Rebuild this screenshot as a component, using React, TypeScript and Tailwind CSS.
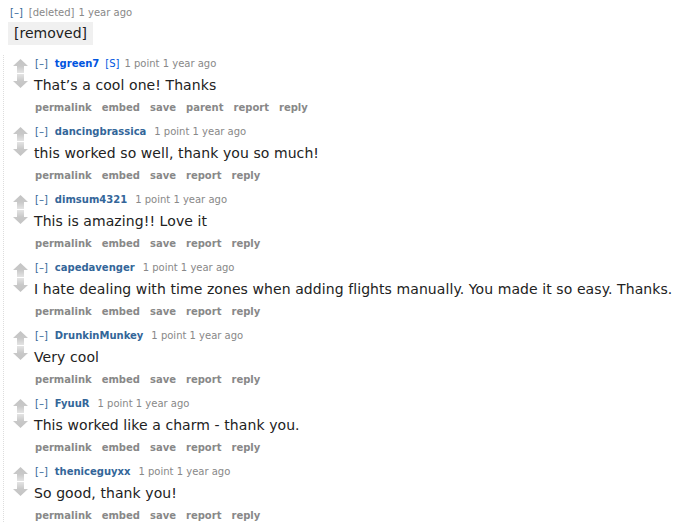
const comments = [
  { author: "tgreen7", op: true, body: "That’s a cool one! Thanks", parent: true },
  { author: "dancingbrassica", body: "this worked so well, thank you so much!" },
  { author: "dimsum4321", body: "This is amazing!! Love it" },
  { author: "capedavenger", body: "I hate dealing with time zones when adding flights manually. You made it so easy. Thanks." },
  { author: "DrunkinMunkey", body: "Very cool" },
  { author: "FyuuR", body: "This worked like a charm - thank you." },
  { author: "theniceguyxx", body: "So good, thank you!" },
];

function Arrow({ down }: { down?: boolean }) {
  const id = down ? "gd" : "gu";
  return (
    <svg width="15" height="14" viewBox="0 0 15 14" className={down ? "rotate-180" : ""}>
      <defs>
        <linearGradient id={id} x1="0" y1="0" x2="0" y2="1">
          <stop offset="0" stopColor="#c4c4c4" />
          <stop offset="0.5" stopColor="#c8c8c8" />
          <stop offset="1" stopColor="#e4e4e4" />
        </linearGradient>
      </defs>
      <polygon points="7.5,0 15,7 11,7 11,14 4,14 4,7 0,7" fill={`url(#${id})`} />
    </svg>
  );
}

function Comment({ c }: { c: (typeof comments)[number] }) {
  const buttons = c.parent
    ? ["permalink", "embed", "save", "parent", "report", "reply"]
    : ["permalink", "embed", "save", "report", "reply"];
  return (
    <div className="flex mb-[9px]">
      <div className="w-[31px] pl-[9px] pt-[4px] flex flex-col">
        <Arrow />
        <div className="h-[1px]" />
        <Arrow down />
      </div>
      <div className="flex flex-col">
        <div className="h-[16px] flex items-center text-[10px] text-[#888]">
          <span className="text-[#369] mr-[7px]">[–]</span>
          {c.op ? (
            <>
              <span className="font-bold text-[#0055df] mr-[6px]">{c.author}</span>
              <span className="text-[#0055df] mr-[5px]">[S]</span>
            </>
          ) : (
            <span className="font-bold text-[#369] mr-[8px]">{c.author}</span>
          )}
          <span>1 point 1 year ago</span>
        </div>
        <div className="mt-[3px] -ml-[1px] text-[14px] leading-[22px] tracking-[0.08px] text-[#222] whitespace-nowrap">
          {c.body}
        </div>
        <div className="mt-[4px] h-[14px] flex items-center gap-[10px] text-[10px] font-bold text-[#888]">
          {buttons.map((b) => (
            <span key={b}>{b}</span>
          ))}
        </div>
      </div>
    </div>
  );
}

export default function App() {
  return (
    <div
      className="w-[686px] h-[524px] overflow-hidden bg-white pl-[8px]"
      style={{ fontFamily: "Verdana, 'DejaVu Sans', sans-serif" }}
    >
      <div className="h-[20px] pt-[4px] pl-[2px] flex items-center text-[10px] text-[#888]">
        <span className="text-[#369] mr-[6px]">[–]</span>
        <span className="mr-[4px]">[deleted]</span>
        <span>1 year ago</span>
      </div>
      <div className="mt-[2px] w-fit bg-[#f0f0f0] px-[6px] h-[23px] leading-[23px] text-[14px] text-[#222]">
        [removed]
      </div>
      <div className="mt-[10px] -ml-[5px] border-l border-dotted border-[#ddd]">
        {comments.map((c) => (
          <Comment key={c.author} c={c} />
        ))}
      </div>
    </div>
  );
}
